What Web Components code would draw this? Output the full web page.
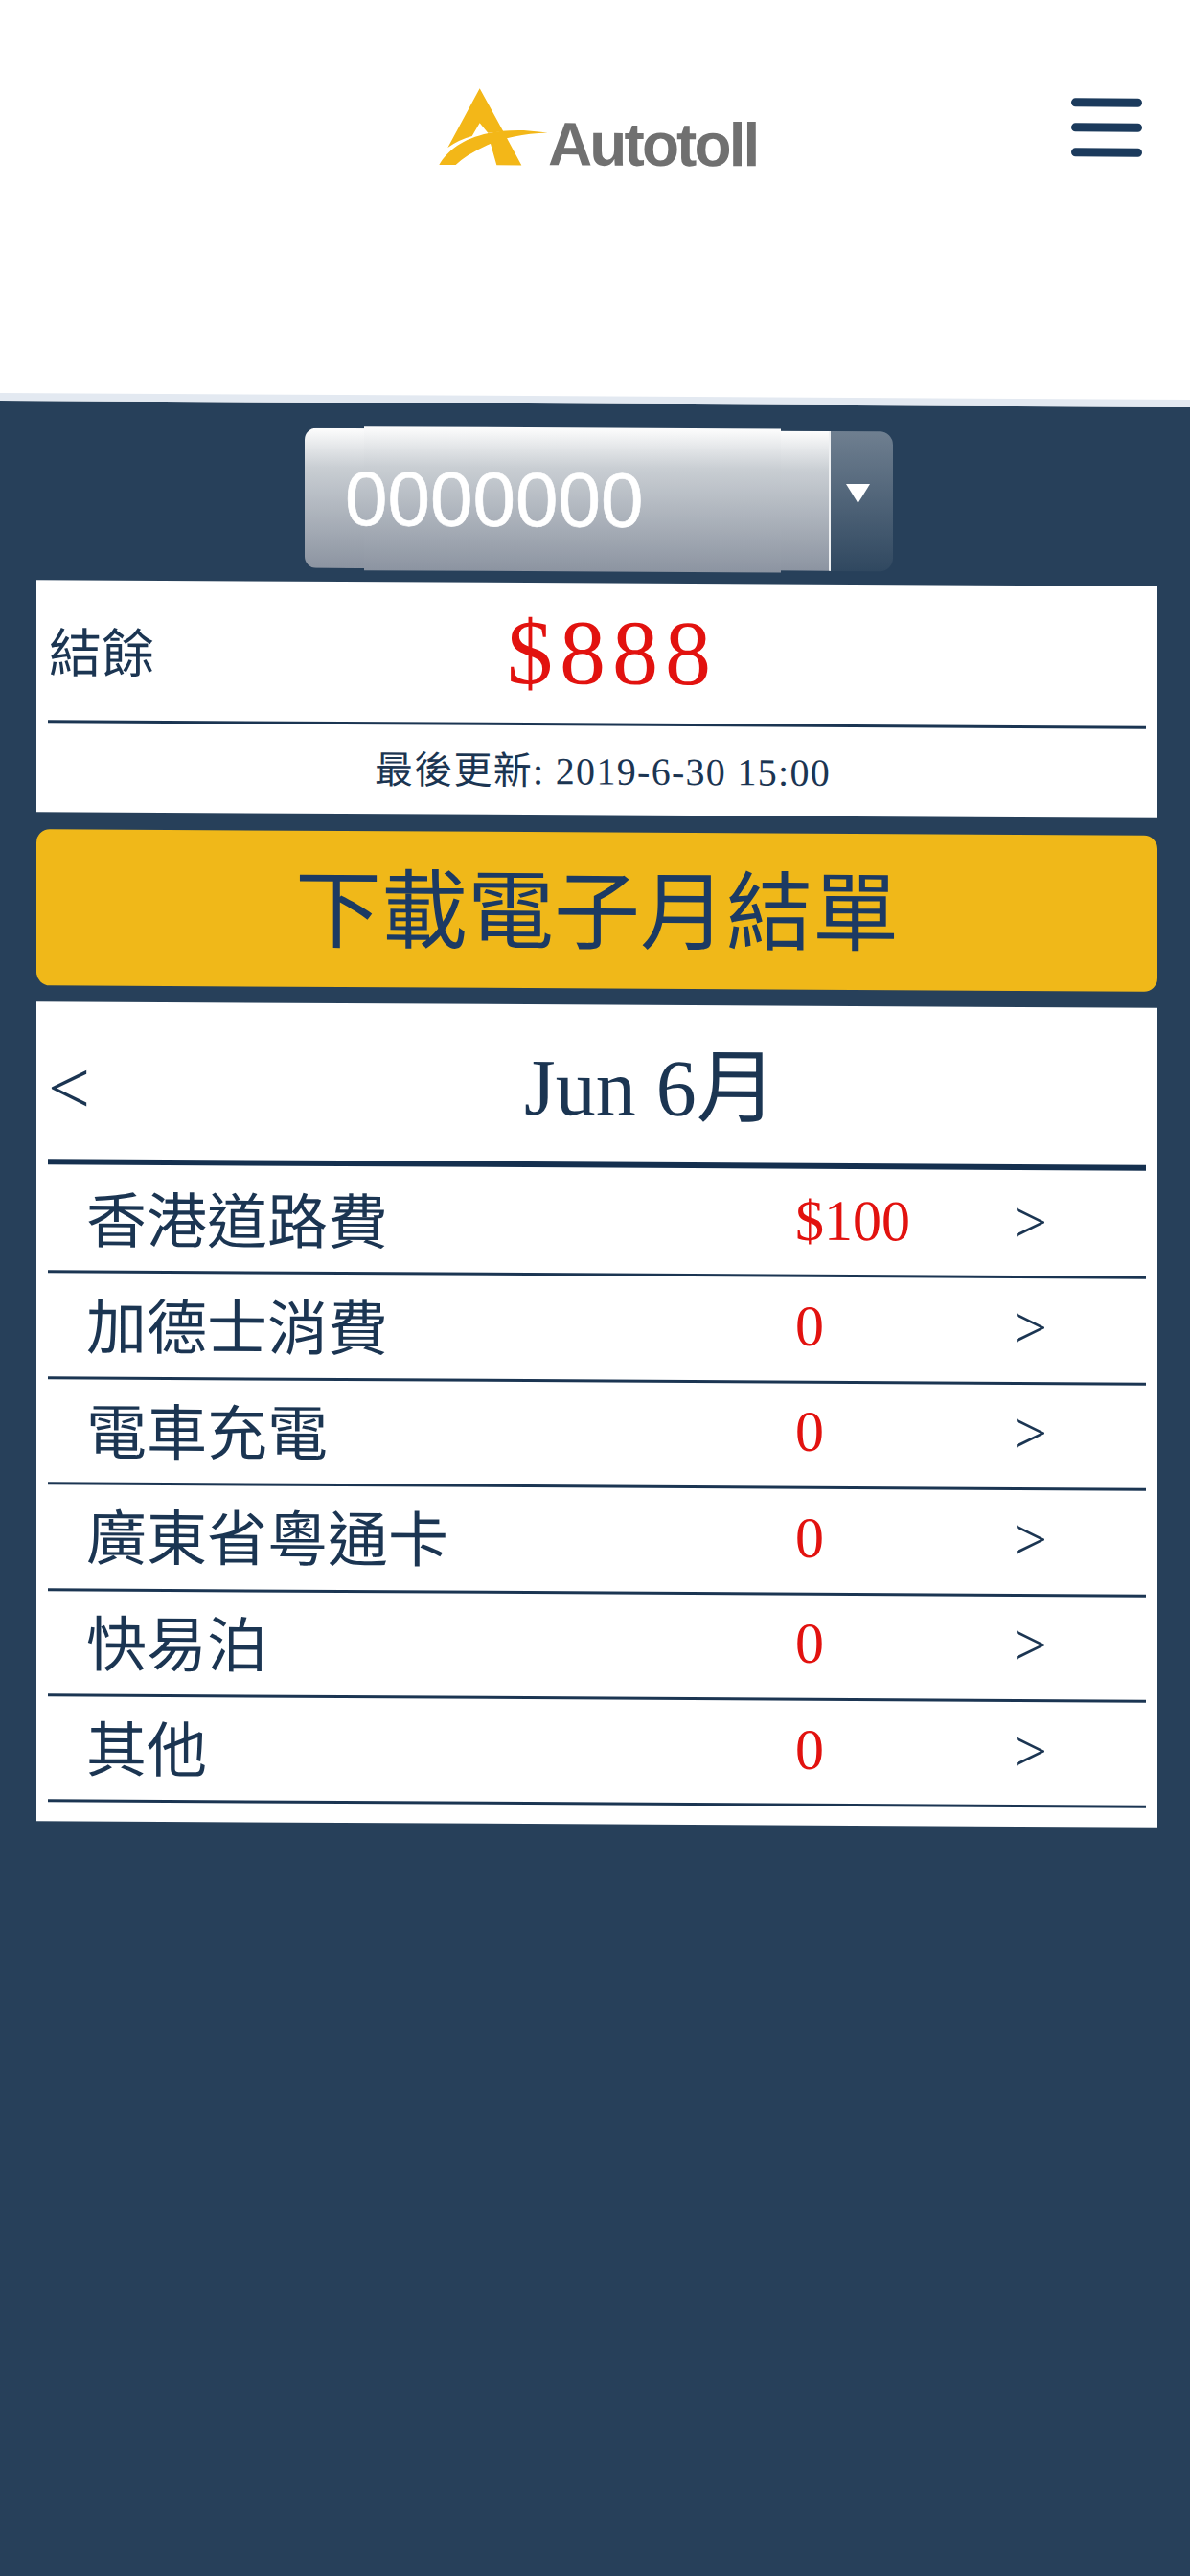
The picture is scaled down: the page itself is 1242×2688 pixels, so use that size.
<!DOCTYPE html>
<html lang="zh-Hant">
<head>
<meta charset="utf-8">
<title>Autotoll</title>
<style>
  html, body { margin: 0; padding: 0; background: #27405a; }
  body { width: 1242px; height: 2688px; overflow: hidden; font-family: "Liberation Serif", "Noto Sans CJK TC", serif; color: #1b3552; }
  at-app { transform: skewY(.323deg); transform-origin: top right; }
</style>
</head>
<body>
<at-app>
  <at-header></at-header>
  <at-select>0000000</at-select>
  <at-balance amount="$888" updated="最後更新: 2019-6-30 15:00">結餘</at-balance>
  <at-download>下載電子月結單</at-download>
  <at-month title="Jun 6月">
    <at-row value="$100">香港道路費</at-row>
    <at-row value="0">加德士消費</at-row>
    <at-row value="0">電車充電</at-row>
    <at-row value="0">廣東省粵通卡</at-row>
    <at-row value="0">快易泊</at-row>
    <at-row value="0">其他</at-row>
  </at-month>
</at-app>

<script>
class AtApp extends HTMLElement {
    constructor() {
        super();
        const shadowRoot = this.attachShadow({ mode: 'open' });
        shadowRoot.innerHTML = `
            <style>
                :host { display: block; width: 1242px; }
                main { display: flex; flex-direction: column; padding: 0 34px 0 38px; }
            </style>
            <slot name="top"></slot>
            <main><slot></slot></main>
        `;
        const header = this.querySelector('at-header');
        if (header) header.slot = 'top';
    }
}

class AtHeader extends HTMLElement {
    constructor() {
        super();
        const shadowRoot = this.attachShadow({ mode: 'open' });
        shadowRoot.innerHTML = `
            <style>
                :host { display: block; background: #fff; }
                header {
                    height: 417px;
                    box-sizing: border-box;
                    padding: 89px 50px 0 450px;
                    display: flex;
                    justify-content: space-between;
                    align-items: flex-start;
                }
                .logo { display: flex; align-items: flex-end; height: 95px; }
                .logo svg { display: block; }
                .name {
                    font: 700 64px/64px "Liberation Sans", sans-serif;
                    letter-spacing: -2.9px;
                    color: #707070;
                    margin: 0 0 -2px -8px;
                }
                .menu { display: flex; flex-direction: column; gap: 17px; margin-top: 14px; }
                .menu i { display: block; width: 74px; height: 9px; border-radius: 5px; background: #1b3a5c; }
                .band { height: 8px; background: #e3e9f1; }
            </style>
            <header>
                <div class="logo">
                    <svg width="130" height="95" viewBox="0 0 390 285">
                        <path fill="#f3b718" d="M152 22 L52 208 Q90 182 128 172 L152 130 L178 162 L226 157 Z"/>
                        <path fill="#f3b718" d="M226 157 L283 262 L205 262 L186 195 L170 170 Z"/>
                        <path fill="#f3b718" d="M25 262 C60 200 140 150 290 153 Q330 156 365 160 Q250 165 175 200 Q110 230 77 262 Z"/>
                    </svg>
                    <span class="name">Autotoll</span>
                </div>
                <div class="menu"><i></i><i></i><i></i></div>
            </header>
            <div class="band"></div>
        `;
    }
}

class AtSelect extends HTMLElement {
    constructor() {
        super();
        const shadowRoot = this.attachShadow({ mode: 'open' });
        shadowRoot.innerHTML = `
            <style>
                :host { display: flex; align-self: flex-start; margin: 27px 0 14px 280px; width: 614px; height: 146px; }
                .field {
                    position: relative;
                    flex: 1;
                    border-radius: 12px 0 0 12px;
                    background: linear-gradient(#fdfdfd 0, #c9ced3 28%, #8c94a1 100%);
                    border-right: 2px solid #eef0f2;
                    display: flex;
                    align-items: center;
                    padding-left: 42px;
                    font: 400 80px/1 "Liberation Sans", sans-serif;
                    -webkit-text-stroke: .6px #fff;
                    color: #fff;
                }
                .field::before {
                    content: "";
                    position: absolute;
                    left: 62px; right: 50px; top: -2px; bottom: -2px;
                    background: linear-gradient(#fdfdfd 0, #c9ced3 28%, #8c94a1 100%);
                }
                .field span { position: relative; top: 1px; }
                .arrow {
                    width: 65px;
                    border-radius: 0 14px 14px 0;
                    background: linear-gradient(#6f7f90, #304860);
                    display: flex;
                    justify-content: flex-start;
                    padding: 55px 0 0 16px;
                    box-sizing: border-box;
                }
                .arrow svg { display: block; }
            </style>
            <div class="field"><span><slot></slot></span></div>
            <div class="arrow"><svg width="25" height="20" viewBox="0 0 25 20"><polygon fill="#fff" points="0,0 25,0 12.5,20"/></svg></div>
        `;
    }
}

class AtBalance extends HTMLElement {
    constructor() {
        super();
        const shadowRoot = this.attachShadow({ mode: 'open' });
        shadowRoot.innerHTML = `
            <style>
                :host { display: block; background: #fff; padding: 0 12px; height: 242px; box-sizing: border-box; }
                .top {
                    height: 149px;
                    box-sizing: border-box;
                    border-bottom: 3px solid #1b3552;
                    display: grid;
                    grid-template-columns: 479px 1fr;
                    align-items: center;
                }
                .label { font: 400 55px/1 "Noto Sans CJK TC", sans-serif; padding-left: 1px; margin-top: -2px; }
                .amount { font: 400 96px/1 "Liberation Serif", serif; letter-spacing: 7px; color: #e2120f; }
                .updated { text-align: center; font-size: 40px; line-height: 96px; letter-spacing: 1.3px; padding-left: 12px; white-space: nowrap; }
            </style>
            <div class="top">
                <span class="label"><slot></slot></span>
                <span class="amount"></span>
            </div>
            <div class="updated"></div>
        `;
        shadowRoot.querySelector('.amount').textContent = this.getAttribute('amount');
        shadowRoot.querySelector('.updated').textContent = this.getAttribute('updated');
    }
}

class AtDownload extends HTMLElement {
    constructor() {
        super();
        const shadowRoot = this.attachShadow({ mode: 'open' });
        shadowRoot.innerHTML = `
            <style>
                :host {
                    display: flex;
                    align-items: center;
                    justify-content: center;
                    margin: 18px 0 17px;
                    height: 163px;
                    box-sizing: border-box;
                    padding-bottom: 12px;
                    border-radius: 14px;
                    background: #f0b819;
                    color: #1c3a63;
                    font: 400 90px/1 "Noto Sans CJK TC", sans-serif;
                }
            </style>
            <slot></slot>
        `;
    }
}

class AtMonth extends HTMLElement {
    constructor() {
        super();
        const shadowRoot = this.attachShadow({ mode: 'open' });
        shadowRoot.innerHTML = `
            <style>
                :host { display: block; background: #fff; padding: 0 12px 21px; height: 855px; box-sizing: border-box; }
                .head {
                    height: 170px;
                    box-sizing: border-box;
                    border-bottom: 6px solid #15304f;
                    margin-bottom: 3px;
                    display: grid;
                    grid-template-columns: 497px auto 1fr;
                    align-items: center;
                }
                .prev { font-size: 78px; line-height: 1; margin-top: 15px; }
                .title { font-size: 84px; line-height: 1; margin-top: 9px; white-space: nowrap; }
            </style>
            <div class="head">
                <span class="prev">&lt;</span>
                <span class="title"></span>
                <span></span>
            </div>
            <slot></slot>
        `;
        shadowRoot.querySelector('.title').textContent = this.getAttribute('title');
    }
}

class AtRow extends HTMLElement {
    constructor() {
        super();
        const shadowRoot = this.attachShadow({ mode: 'open' });
        shadowRoot.innerHTML = `
            <style>
                :host {
                    display: grid;
                    grid-template-columns: 740px 228px 1fr;
                    align-items: center;
                    height: 110.4px;
                    box-sizing: border-box;
                    padding-left: 40px;
                    border-bottom: 3px solid #1b3552;
                }
                .label { font: 400 63px/1 "Noto Sans CJK TC", sans-serif; margin-top: -6px; white-space: nowrap; }
                .value { font: 400 60px/1 "Liberation Serif", serif; color: #e2120f; margin-top: -6px; }
                .go { font: 400 62px/1 "Liberation Serif", serif; margin-top: -6px; }
            </style>
            <span class="label"><slot></slot></span>
            <span class="value"></span>
            <span class="go">&gt;</span>
        `;
        shadowRoot.querySelector('.value').textContent = this.getAttribute('value');
    }
}

customElements.define('at-app', AtApp);
customElements.define('at-header', AtHeader);
customElements.define('at-select', AtSelect);
customElements.define('at-balance', AtBalance);
customElements.define('at-download', AtDownload);
customElements.define('at-month', AtMonth);
customElements.define('at-row', AtRow);
</script>
</body>
</html>
